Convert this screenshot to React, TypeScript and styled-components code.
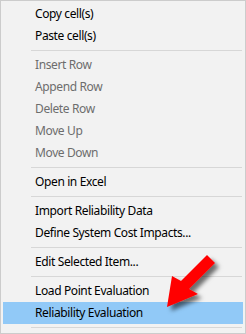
import React from "react";
import styled, { createGlobalStyle } from "styled-components";

type Entry = { label?: string; disabled?: boolean; active?: boolean; sep?: boolean };

const entries: Entry[] = [
	{ label: "Copy cell(s)" },
	{ label: "Paste cell(s)" },
	{ sep: true },
	{ label: "Insert Row", disabled: true },
	{ label: "Append Row", disabled: true },
	{ label: "Delete Row", disabled: true },
	{ label: "Move Up", disabled: true },
	{ label: "Move Down", disabled: true },
	{ sep: true },
	{ label: "Open in Excel" },
	{ sep: true },
	{ label: "Import Reliability Data" },
	{ label: "Define System Cost Impacts..." },
	{ sep: true },
	{ label: "Edit Selected Item..." },
	{ sep: true },
	{ label: "Load Point Evaluation" },
	{ label: "Reliability Evaluation", active: true },
	{ sep: true },
];

const App: React.FC = () => {
	return (
		<>
			<GlobalStyle />
			<Menu>
				{entries.map((e, i) =>
					e.sep ? (
						<Separator key={i} />
					) : (
						<MenuItem key={i} $disabled={e.disabled} $active={e.active}>
							{e.label}
						</MenuItem>
					)
				)}
				<Arrow width="246" height="334" viewBox="0 0 246 334">
					<defs>
						<filter id="shadow" x="-30%" y="-30%" width="160%" height="160%">
							<feDropShadow dx="4" dy="4" stdDeviation="2.2" floodColor="#000" floodOpacity="0.55" />
						</filter>
					</defs>
					<polygon
						points="167,307 172,276 181,281 207,255 215,263 189,289 198,294"
						fill="#ff0000"
						filter="url(#shadow)"
					/>
				</Arrow>
			</Menu>
		</>
	);
};

export default App;

const GlobalStyle = createGlobalStyle`
	body {
		margin: 0;
		background: #f2f2f2;
	}
`;

const Menu = styled.div`
	position: relative;
	box-sizing: border-box;
	width: 246px;
	height: 334px;
	padding: 2px;
	background-color: #f2f2f2;
	border: 1px solid #cccccc;
	font-family: "Noto Sans", "Open Sans", sans-serif;
	font-size: 12px;
	letter-spacing: -0.38px;
	display: flex;
	flex-direction: column;
`;

const MenuItem = styled.div<{ $disabled?: boolean; $active?: boolean }>`
	height: 22px;
	line-height: 22px;
	padding-left: 32px;
	color: ${(p) => (p.$disabled ? "#6d6d6d" : "#000000")};
	background-color: ${(p) => (p.$active ? "#91c9f7" : "transparent")};
	white-space: nowrap;
`;

const Separator = styled.div`
	height: 1px;
	margin: 3px 1px 3px 28px;
	background-color: #d7d7d7;
`;

const Arrow = styled.svg`
	position: absolute;
	left: -1px;
	top: -1px;
	pointer-events: none;
`;
